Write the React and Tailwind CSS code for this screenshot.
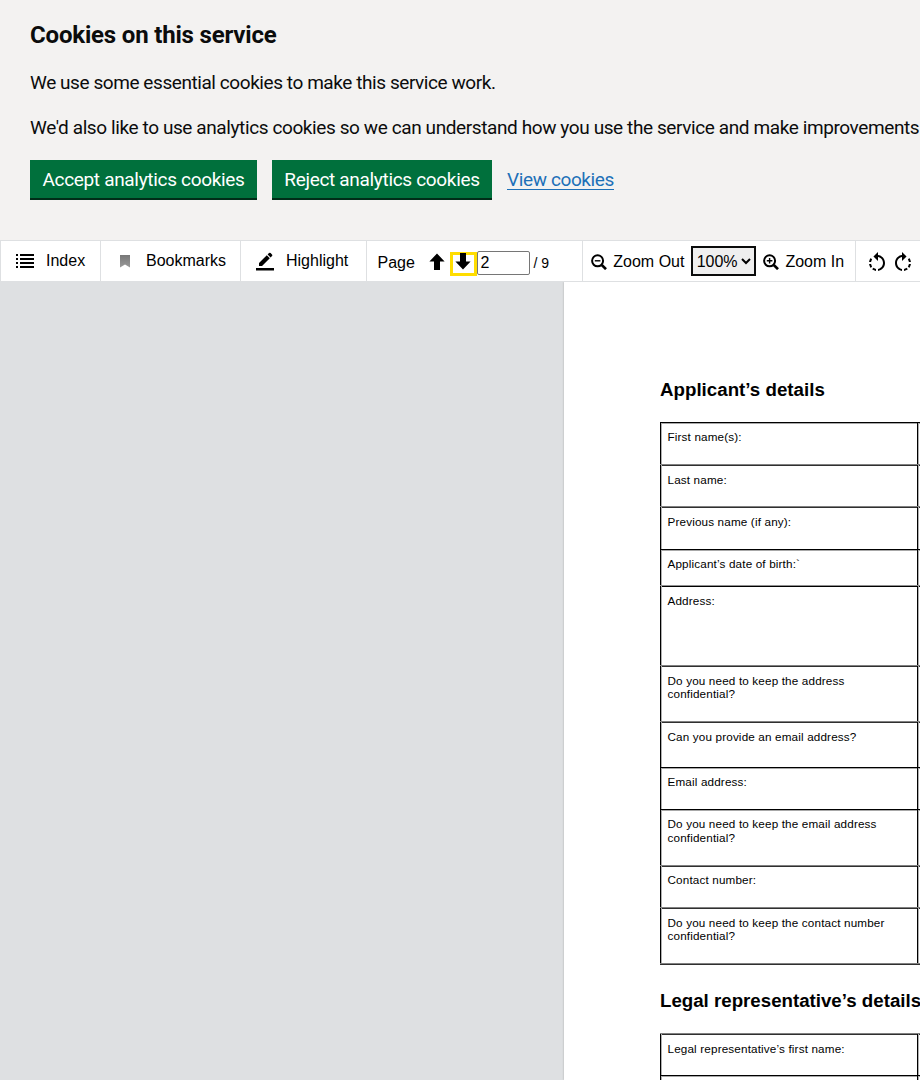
const SHARP = 'border-black shadow-[inset_0_1px_0_#a8a8a8]';
const SOFT = 'border-[#808080] shadow-[inset_0_1px_0_#303030]';
const LATE = 'border-[#909090] shadow-[inset_0_1px_0_#000]';

const ROWS = [
  [`h-[42px] ${SHARP}`, 'pt-[7px] leading-[13px]', 'First name(s):'],
  [`h-[42px] ${SOFT}`, 'pt-[8px] leading-[13px]', 'Last name:'],
  [`h-[43px] ${SOFT}`, 'pt-[8px] leading-[13px]', 'Previous name (if any):'],
  [`h-[36px] ${SHARP}`, 'pt-[7px] leading-[13px]', 'Applicant’s date of birth:`'],
  [`h-[80px] ${LATE}`, 'pt-[8px] leading-[13px]', 'Address:'],
  [`h-[56px] ${SOFT}`, 'pt-[8px] leading-[13px]', 'Do you need to keep the address', 'confidential?'],
  [`h-[46px] ${SOFT}`, 'pt-[8px] leading-[13px]', 'Can you provide an email address?'],
  [`h-[42px] ${SHARP}`, 'pt-[7px] leading-[13px]', 'Email address:'],
  [`h-[56px] ${SHARP}`, 'pt-[7px] leading-[14px]', 'Do you need to keep the email address', 'confidential?'],
  [`h-[42px] ${SOFT}`, 'pt-[7px] leading-[13px]', 'Contact number:'],
  [`h-[56px] ${SOFT}`, 'pt-[8px] leading-[13px]', 'Do you need to keep the contact number', 'confidential?'],
];

function Row({ frame, pad, lines }) {
  return (
    <div className={`${frame} flex border-t`}>
      <div className={`${pad} w-[257px] shrink-0 border-l border-black pl-[6.5px] text-[11.7px] tracking-[0.155px] shadow-[inset_1px_0_0_#b0b0b0]`}>
        {lines.map((l) => (
          <div key={l} className="whitespace-nowrap">{l}</div>
        ))}
      </div>
      <div className="flex-1 border-l border-black shadow-[inset_1px_0_0_#b0b0b0]" />
    </div>
  );
}

function Arrow({ down }) {
  return (
    <svg width="16" height="18" viewBox="0 0 16 18" className={down ? 'rotate-180' : ''}>
      <path d="M8 0.5 15.6 8.6H11V17H5V8.6H.4Z" />
    </svg>
  );
}

function Zoom({ plus }) {
  return (
    <svg width="16" height="16" viewBox="0 0 16 16" fill="none" stroke="#000">
      <circle cx="6.6" cy="6.8" r="5.5" strokeWidth="2" />
      <path d="M10.8 11 15 15.2" strokeWidth="2.6" />
      <path d={plus ? 'M3.8 6.8h5.6M6.6 4v5.6' : 'M3.8 6.8h5.6'} strokeWidth="1.4" />
    </svg>
  );
}

function Rotate({ flip }) {
  return (
    <svg width="24" height="24" viewBox="0 0 24 24" className={flip ? '-scale-x-100' : ''}>
      <path d="M7.11 8.53 5.7 7.11C4.8 8.27 4.24 9.61 4.07 11h2.02c.14-.87.49-1.72 1.02-2.47zM6.09 13H4.07c.17 1.39.72 2.73 1.62 3.89l1.41-1.42c-.52-.75-.87-1.59-1.01-2.47zm1.01 5.32c1.16.9 2.51 1.44 3.9 1.61V17.9c-.87-.15-1.71-.49-2.46-1.03L7.1 18.32zM13 4.07V1L8.45 5.55 13 10V6.09c2.84.48 5 2.94 5 5.91s-2.16 5.43-5 5.91v2.02c3.95-.49 7-3.85 7-7.93s-3.05-7.44-7-7.93z" />
    </svg>
  );
}

export default function App() {
  return (
    <div className="flex h-[1080px] w-[920px] flex-col overflow-hidden bg-[#dee0e2] font-['Liberation_Sans',Arial,sans-serif] text-black">
      <section className="h-[240px] shrink-0 bg-[#f3f2f1] pl-[30px] pt-5 font-['Roboto',sans-serif] text-[19px] leading-[25px] text-[#0b0c0c]">
        <h2 className="text-2xl leading-[30px] font-bold tracking-[-0.18px] whitespace-nowrap">Cookies on this service</h2>
        <p className="mt-5 tracking-[-0.43px] whitespace-nowrap">We use some essential cookies to make this service work.</p>
        <p className="mt-5 tracking-[-0.4px] whitespace-nowrap">We'd also like to use analytics cookies so we can understand how you use the service and make improvements</p>
        <div className="mt-5 flex tracking-[-0.32px]">
          <button className="h-[38px] w-[227px] bg-[#00703c] text-white shadow-[0_2px_0_#002d18] whitespace-nowrap">Accept analytics cookies</button>
          <button className="ml-[15px] h-[38px] w-[220px] bg-[#00703c] text-white shadow-[0_2px_0_#002d18] whitespace-nowrap">Reject analytics cookies</button>
          <a className="ml-[15px] mt-[7px] tracking-[-0.38px] text-[#1d70b8] underline decoration-1 underline-offset-[3px]">View cookies</a>
        </div>
      </section>
      <nav className="flex h-[42px] shrink-0 border-y border-[#dee0e2] bg-white text-base leading-10 whitespace-nowrap">
        <div className="flex w-[101px] shrink-0 border-x border-[#dee0e2] pl-[15px]">
          <svg width="18" height="14" viewBox="0 0 18 14" className="mt-[13px]" shapeRendering="crispEdges">
            <path d="M0 0h2v2H0zM4 0h14v2H4zM0 4h2v2H0zM4 4h14v2H4zM0 8h2v2H0zM4 8h14v2H4zM0 12h2v2H0zM4 12h14v2H4z" />
          </svg>
          <span className="ml-3">Index</span>
        </div>
        <div className="flex w-[140px] shrink-0 border-r border-[#dee0e2] pl-[19px]">
          <svg width="10" height="13" viewBox="0 0 10 13" className="mt-[14px]">
            <defs><linearGradient id="bm" x2="0" y2="1"><stop stopColor="#777" /><stop offset="1" stopColor="#999" /></linearGradient></defs>
            <path fill="url(#bm)" d="M0 0h10v12.5L5 9.500 0 12.500z" />
          </svg>
          <span className="ml-4">Bookmarks</span>
        </div>
        <div className="flex w-[126px] shrink-0 border-r border-[#dee0e2] pl-[15px]">
          <svg width="18" height="19" viewBox="0 0 18 19" className="mt-[11px]">
            <path d="M3 14v-3l7.8-7.8 3 3L6 14zM11.6 2.400 13 1q.8-.7 1.600 0l1.400 1.400q.7.8 0 1.600l-1.400 1.400zM0 16h18v2.500H0z" />
          </svg>
          <span className="ml-3">Highlight</span>
        </div>
        <div className="flex w-[216px] shrink-0 border-r border-[#dee0e2] pl-[10.5px]">
          <span className="mt-[2px] h-8">Page</span>
          <span className="ml-[14.5px] mt-[12px]"><Arrow /></span>
          <span className="ml-[5px] mt-[11px] flex h-6 w-[27px] border-[3px] border-[#ffdd00] pl-[2px]"><span className="-mt-[3px]"><Arrow down /></span></span>
          <input className="mt-[10px] h-6 w-[53px] rounded-[2px] border border-[#767676] px-[2px]" defaultValue="2" />
          <span className="mt-[2px] ml-[3px] text-sm leading-10">/ 9</span>
        </div>
        <div className="flex w-[273px] shrink-0 border-r border-[#dee0e2] pl-2">
          <span className="mt-[13px]"><Zoom /></span>
          <span className="ml-[6.3px] mt-px h-8">Zoom Out</span>
          <div className="ml-[6.7px] mt-[5px] flex h-[30px] w-[65px] shrink-0 items-center border-2 border-[#0b0c0c] bg-[#efefef] pl-[3.500px] leading-none">
            <span className="mt-[2px]">100%</span>
            <svg width="10" height="7" viewBox="0 0 10 7" className="ml-[3px]" fill="none" stroke="#000" strokeWidth="2"><path d="m1 1 4 4 4-4" /></svg>
          </div>
          <span className="ml-[7px] mt-[13px]"><Zoom plus /></span>
          <span className="ml-[6.3px] mt-px h-8">Zoom In</span>
        </div>
        <div className="flex shrink-0 pl-[9px] pt-[10px]"><Rotate /><span className="ml-[2px]"><Rotate flip /></span></div>
      </nav>
      <main className="ml-[564px] w-[356px] flex-1 overflow-hidden bg-white pl-24 pt-[96px] shadow-[0_0_2px_#aaa] [clip-path:inset(0_0_0_-4px)]">
        <h3 className="h-[44px] text-[18.7px] leading-6 font-bold tracking-[0.02px] whitespace-nowrap">Applicant’s details</h3>
        <div className="border-b border-[#808080] shadow-[0_1px_0_#303030]">
          {ROWS.map(([frame, pad, ...lines]) => <Row key={lines.join()} frame={frame} pad={pad} lines={lines} />)}
        </div>
        <h3 className="mt-[25px] h-[44px] text-[18.7px] leading-6 font-bold whitespace-nowrap">Legal representative’s details</h3>
        <Row frame={`h-[42px] ${SOFT}`} pad="pt-[8px] leading-[13px]" lines={['Legal representative’s first name:']} />
        <Row frame={`h-[42px] ${SHARP}`} pad="pt-[7px] leading-[13px]" lines={[]} />
      </main>
    </div>
  );
}
